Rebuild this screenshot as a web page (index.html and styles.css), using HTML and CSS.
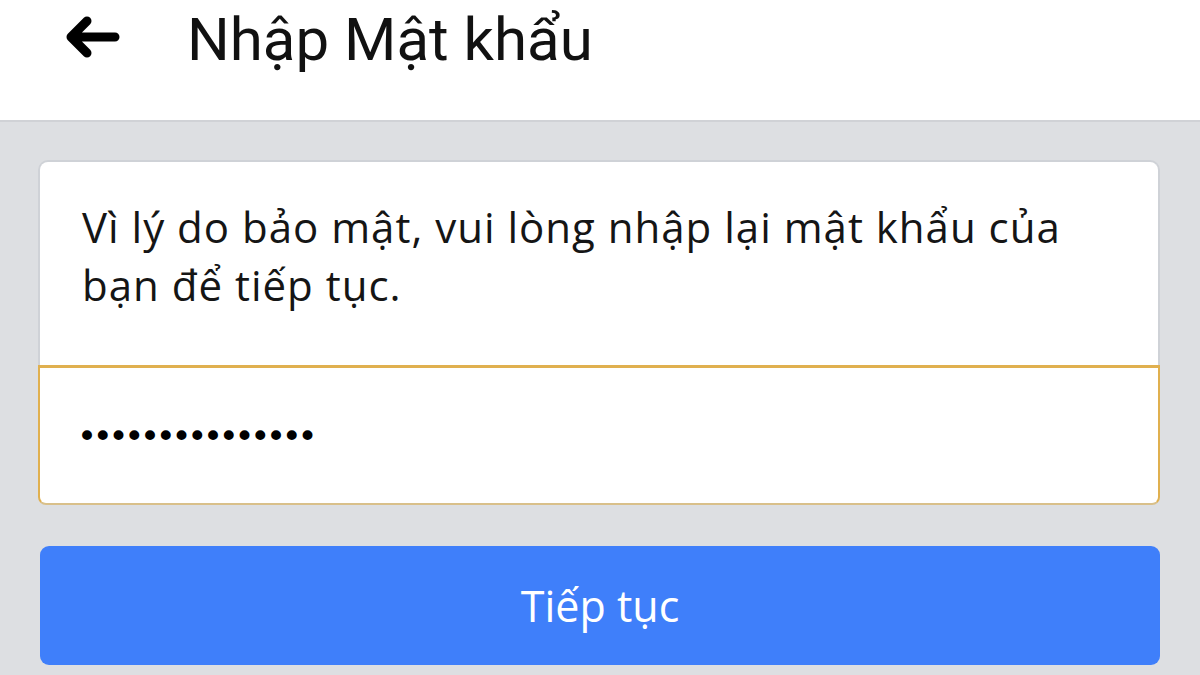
FILE: index.html
```html
<!DOCTYPE html>
<html lang="vi">
<head>
<meta charset="utf-8">
<link rel="stylesheet" href="styles.css">
</head>
<body>
<header class="topbar">
  <svg class="back" viewBox="0 0 56 44" width="56" height="44" aria-hidden="true">
    <path d="M51 22H8M23 6L7 22l16 16" fill="none" stroke="#000" stroke-width="9" stroke-linecap="round" stroke-linejoin="round"/>
  </svg>
  <h1 class="title">Nhập Mật khẩu</h1>
</header>
<main class="content">
  <section class="card">
    <p class="msg">Vì lý do bảo mật, vui lòng nhập lại mật khẩu của bạn để tiếp tục.</p>
    <div class="field"><span class="dots">•••••••••••••••</span></div>
  </section>
  <button class="btn">Tiếp tục</button>
</main>
</body>
</html>
```
FILE: styles.css
```css
html, body {
  margin: 0;
  padding: 0;
  height: 100%;
}
body {
  background: #dddfe2;
  font-family: Roboto, "Noto Sans", sans-serif;
  color: #111;
  overflow: hidden;
}
.topbar {
  background: #fff;
  height: 122px;
  display: flex;
  align-items: flex-start;
  padding: 15px 0 0 64px;
  box-sizing: border-box;
  border-bottom: 2px solid #d0d2d6;
}
.back {
  flex: none;
}
.title {
  margin: -10px 0 0 67px;
  font-weight: 400;
  font-size: 60px;
  line-height: 70px;
  color: #111;
}
.content {
  padding: 38px 40px 0 38px;
}
.card {
  display: flex;
  flex-direction: column;
}
.msg {
  margin: 0;
  background: #fff;
  border: 2px solid #cfd2d7;
  border-bottom: none;
  border-radius: 10px 10px 0 0;
  padding: 36px 40px 0 42px;
  height: 167px;
  font-family: "Open Sans", Roboto, sans-serif;
  font-size: 42px;
  line-height: 58px;
  letter-spacing: 1px;
  color: #151515;
}
.field {
  background: #fff;
  border: 2px solid #e0b04f;
  border-top-width: 3px;
  border-bottom-color: #d9c08a;
  border-radius: 0 0 8px 8px;
  height: 135px;
  display: flex;
  align-items: center;
  padding-left: 37px;
}
.dots {
  font-size: 34px;
  letter-spacing: -4.3px;
  color: #000;
  font-family: "DejaVu Sans", sans-serif;
}
.btn {
  display: block;
  width: 1120px;
  margin: 41px 0 0 2px;
  height: 119px;
  background: #3f7ffa;
  border: none;
  border-radius: 9px;
  color: #fff;
  font-family: "Open Sans", Roboto, sans-serif;
  font-size: 43px;
}
```
